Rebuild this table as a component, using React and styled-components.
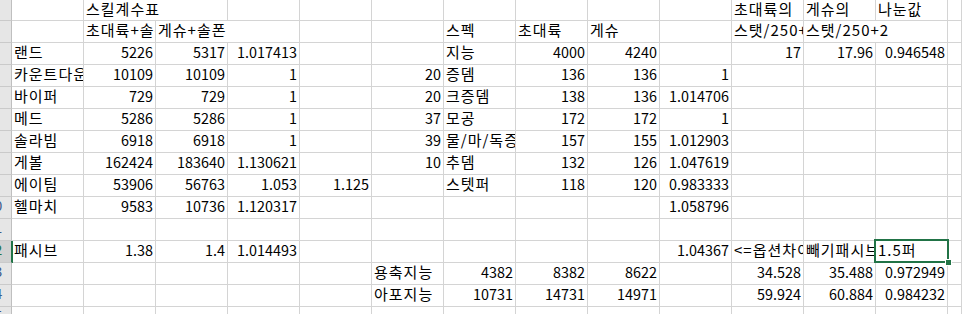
import React from 'react'
import styled, { createGlobalStyle } from 'styled-components'

const GlobalStyle = createGlobalStyle`
  html, body {
    margin: 0;
    padding: 0;
    background: #ffffff;
    overflow: hidden;
  }
`

const GRID = '#d4d4d4'
const EXCEL_GREEN = '#217346'

const Sheet = styled.div`
  display: grid;
  grid-template-columns: 12px repeat(13, 72px) 1fr;
  grid-template-rows: 21px;
  grid-auto-rows: 22px;
  width: 962px;
  height: 314px;
  overflow: hidden;
  font-family: "Noto Sans CJK KR", "Noto Sans", sans-serif;
  font-size: 14.4px;
  color: #000;
  background: #fff;
`

const RowHeader = styled.div`
  position: relative;
  overflow: hidden;
  background: ${p => (p.$selected ? '#d2d2d2' : '#e6e6e6')};
  border-bottom: 1px solid #cacaca;
  border-right: 1px solid ${p => (p.$selected ? EXCEL_GREEN : '#bfbfbf')};
  box-shadow: ${p => (p.$selected ? `1px 0 0 ${EXCEL_GREEN}` : 'none')};
  z-index: ${p => (p.$selected ? 2 : 0)};
`

// header is wider than what is scrolled into view; only its right edge shows
const RowNum = styled.div`
  width: 31px;
  margin-left: -21px;
  text-align: center;
  line-height: 17px;
  font-size: 14px;
  color: ${p => (p.$selected ? EXCEL_GREEN : '#3a5a8a')};
`

const Cell = styled.div`
  position: relative;
  grid-column: span ${p => p.$span || 1};
  border-right: 1px solid ${GRID};
  border-bottom: 1px solid ${GRID};
  padding: 0 2px;
  line-height: 17px;
  white-space: nowrap;
  overflow: ${p => (p.$selected ? 'visible' : 'hidden')};
  text-align: ${p => (p.$num ? 'right' : 'left')};
  font-size: ${p => (p.$num ? '14.4px' : '15px')};
  letter-spacing: ${p => (p.$num ? '0' : '1px')};
  z-index: ${p => (p.$selected ? 3 : 0)};
`

const Selection = styled.div`
  position: absolute;
  top: -2px;
  left: -2px;
  right: -2px;
  bottom: -1px;
  border: 2px solid ${EXCEL_GREEN};
  pointer-events: none;
`

const FillHandle = styled.div`
  position: absolute;
  right: -5px;
  bottom: -5px;
  width: 5px;
  height: 5px;
  background: ${EXCEL_GREEN};
  border: 1px solid #fff;
`

const COLS = 'ABCDEFGHIJKLMN'.split('')

const rows = [
  { n: 1, cells: { B: ['스킬계수표', 2], K: '초대륙의', L: '게슈의', M: '나눈값' } },
  { n: 2, cells: { B: '초대륙+솔폰', C: ['게슈+솔폰', 2], G: '스펙', H: '초대륙', I: '게슈', K: '스탯/250+2', L: ['스탯/250+2', 2] } },
  { n: 3, cells: { A: '랜드', B: '5226', C: '5317', D: '1.017413', G: '지능', H: '4000', I: '4240', K: '17', L: '17.96', M: '0.946548' } },
  { n: 4, cells: { A: '카운트다운', B: '10109', C: '10109', D: '1', F: '20', G: '증뎀', H: '136', I: '136', J: '1' } },
  { n: 5, cells: { A: '바이퍼', B: '729', C: '729', D: '1', F: '20', G: '크증뎀', H: '138', I: '136', J: '1.014706' } },
  { n: 6, cells: { A: '메드', B: '5286', C: '5286', D: '1', F: '37', G: '모공', H: '172', I: '172', J: '1' } },
  { n: 7, cells: { A: '솔라빔', B: '6918', C: '6918', D: '1', F: '39', G: '물/마/독증뎀', H: '157', I: '155', J: '1.012903' } },
  { n: 8, cells: { A: '게볼', B: '162424', C: '183640', D: '1.130621', F: '10', G: '추뎀', H: '132', I: '126', J: '1.047619' } },
  { n: 9, cells: { A: '에이팀', B: '53906', C: '56763', D: '1.053', E: '1.125', G: '스텟퍼', H: '118', I: '120', J: '0.983333' } },
  { n: 10, cells: { A: '헬마치', B: '9583', C: '10736', D: '1.120317', J: '1.058796' } },
  { n: 11, cells: {} },
  { n: 12, cells: { A: '패시브', B: '1.38', C: '1.4', D: '1.014493', J: '1.04367', K: '<=옵션차이', L: '빼기패시브', M: '1.5퍼' } },
  { n: 13, cells: { F: '용축지능', G: '4382', H: '8382', I: '8622', K: '34.528', L: '35.488', M: '0.972949' } },
  { n: 14, cells: { F: '아포지능', G: '10731', H: '14731', I: '14971', K: '59.924', L: '60.884', M: '0.984232' } },
  { n: 15, cells: {} },
]

const SELECTED = { row: 12, col: 'M' }

const isNumber = v => /^-?\d+(\.\d+)?$/.test(v)

function SheetRow({ row }) {
  const out = []
  const rowSelected = row.n === SELECTED.row
  out.push(
    <RowHeader key="h" $selected={rowSelected}>
      <RowNum $selected={rowSelected}>{row.n}</RowNum>
    </RowHeader>
  )
  let i = 0
  while (i < COLS.length) {
    const col = COLS[i]
    const raw = row.cells[col]
    const [value, span] = Array.isArray(raw) ? raw : [raw, 1]
    const selected = rowSelected && col === SELECTED.col
    out.push(
      <Cell key={col} $span={span} $num={value && isNumber(value)} $selected={selected}>
        {value}
        {selected && (
          <Selection>
            <FillHandle />
          </Selection>
        )}
      </Cell>
    )
    i += span
  }
  return out
}

export default function App() {
  return (
    <>
      <GlobalStyle />
      <Sheet>
        {rows.map(r => (
          <SheetRow key={r.n} row={r} />
        ))}
      </Sheet>
    </>
  )
}
